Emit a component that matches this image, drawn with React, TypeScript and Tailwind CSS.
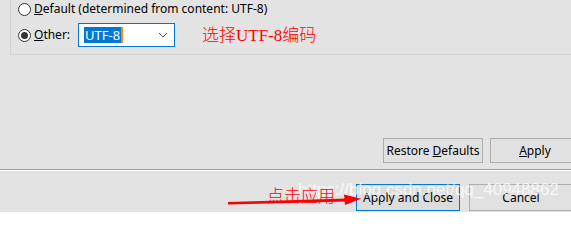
import React from 'react';

function Radio({ checked = false }: { checked?: boolean }) {
  return (
    <span className="flex h-[13px] w-[13px] shrink-0 items-center justify-center rounded-full border border-[#333] bg-white">
      {checked && <span className="h-[7px] w-[7px] rounded-full bg-[#333]" />}
    </span>
  );
}

function Button({ children, width, primary = false }: { children: React.ReactNode; width: string; primary?: boolean }) {
  return (
    <div
      className={`flex shrink-0 items-center justify-center border ${width} ${
        primary ? 'border-[#0078d7] bg-[#dcdcdc]' : 'border-[#adadad] bg-[#e1e1e1]'
      }`}
    >
      {children}
    </div>
  );
}

export default function App() {
  return (
    <div className="relative h-[212px] w-[571px] overflow-hidden bg-[#e3e3e3] font-['Noto_Sans',sans-serif] text-[12px] leading-none text-black">
      {/* encoding group */}
      <div className="ml-[10px] -mr-[4px] box-border flex h-[55px] flex-col border-b border-l border-[#d2d2d2] pl-[7px]">
        <div className="mt-[2px] flex h-[14px] items-center gap-[3px]">
          <Radio />
          <span>
            <span className="underline">D</span>efault (determined from content: UTF-8)
          </span>
        </div>
        <div className="mt-[7px] flex h-[24px] items-center">
          <Radio checked />
          <span className="ml-[3px] w-[44px]">
            <span className="underline">O</span>ther:
          </span>
          <div className="box-border flex h-[24px] w-[97px] items-center border border-[#0078d7] bg-white pl-[5px] pr-[6px]">
            <span className="flex h-[16px] items-center bg-[#0078d7] px-[1px] text-[13px] text-white">UTF-8</span>
            <span className="h-[16px] w-[2px] bg-[#ff8c00]" />
            <svg className="ml-auto" width="10" height="6" viewBox="0 0 10 6">
              <path d="M1 1 L5 5 L9 1" fill="none" stroke="#555" strokeWidth="1" />
            </svg>
          </div>
          <span className="ml-[27px] font-['Liberation_Serif','Noto_Sans_CJK_SC',serif] text-[17px] font-light text-[#ff0000]">
            选择UTF-8编码
          </span>
        </div>
      </div>

      {/* page buttons */}
      <div className="mt-[83px] -mr-[9px] flex h-[25px] justify-end gap-[7px]">
        <Button width="w-[100px]">
          Restore <span className="ml-[3px] underline">D</span>efaults
        </Button>
        <Button width="w-[90px]">
          <span className="underline">A</span>pply
        </Button>
      </div>

      <div className="mt-[6px] h-px bg-[#a0a0a0]" />
      <div className="h-px bg-white" />

      {/* dialog buttons */}
      <div className="mt-[13px] -mr-[2px] flex h-[27px] justify-end gap-[9px]">
        <Button width="w-[104px]" primary>
          Apply and Close
        </Button>
        <Button width="w-[104px]">Cancel</Button>
      </div>

      {/* annotations */}
      <span className="absolute left-[298px] top-[181px] font-['Liberation_Sans',sans-serif] text-[17px] text-white/75">
        https://blog.csdn.net/qq_40948862
      </span>
      <span className="absolute left-[267px] top-[186px] font-['Noto_Sans_CJK_SC',sans-serif] text-[17px] font-light text-[#ff0000]">
        点击应用
      </span>
      <svg className="absolute left-[226px] top-[190px]" width="140" height="18" viewBox="0 0 140 18">
        <polygon points="2,12 121,8.5 121,11.5 2,14.5" fill="#ff0000" />
        <polygon points="118,4.5 135,8.8 119,15" fill="#ff0000" />
      </svg>
    </div>
  );
}
